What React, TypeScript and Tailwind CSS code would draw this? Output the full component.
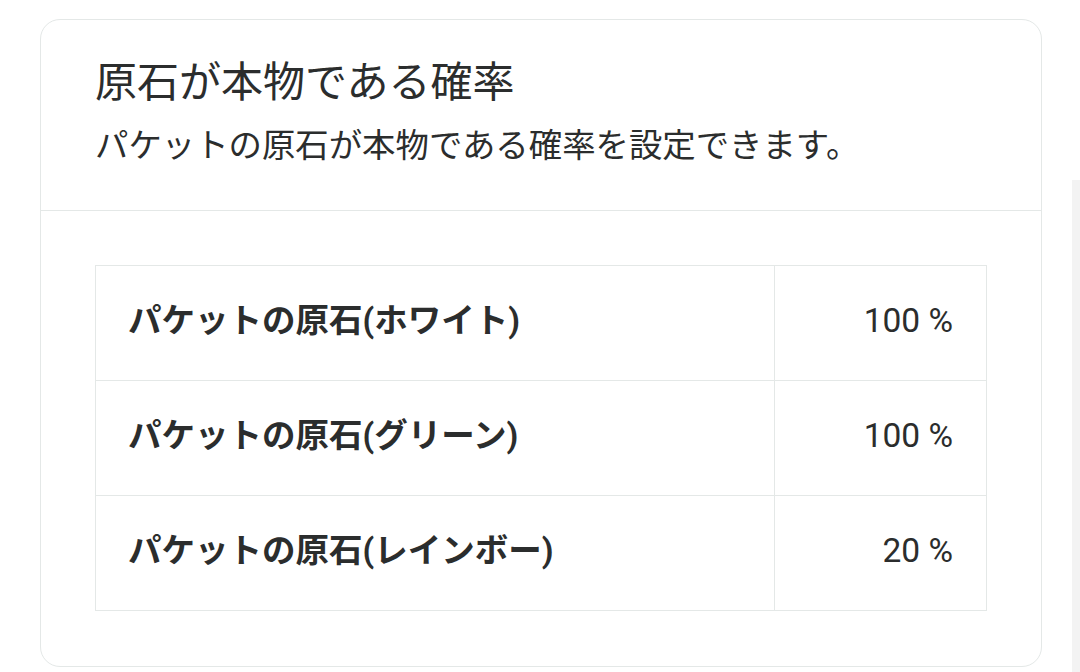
const rows = [
  { label: "パケットの原石(ホワイト)", value: "100 %" },
  { label: "パケットの原石(グリーン)", value: "100 %" },
  { label: "パケットの原石(レインボー)", value: "20 %" },
];

export default function App() {
  return (
    <div
      className="relative h-[672px] w-[1080px] overflow-hidden bg-white text-[#2b2d2d]"
      style={{ fontFamily: 'Roboto, "Noto Sans CJK JP", sans-serif' }}
    >
      <div className="ml-[40px] mt-[19px] w-[1002px] rounded-[20px] border border-[#e4e8e7] bg-white">
        <div className="flex h-[191px] flex-col border-b border-[#e4e8e7] px-[54px] pt-[36px]">
          <h2 className="text-[42px] leading-[54px] font-normal">原石が本物である確率</h2>
          <p className="mt-[14px] text-[33.4px] leading-[44px]">
            パケットの原石が本物である確率を設定できます。
          </p>
        </div>
        <div className="px-[54px] pt-[54px] pb-[55px]">
          <table className="w-full border-collapse border border-[#e4e8e7]">
            <tbody>
              {rows.map((r) => (
                <tr key={r.label} className="h-[115px] border-b border-[#e4e8e7]">
                  <td className="w-[679px] border-r border-[#e4e8e7] pl-[32px] pb-[3px] text-[33.5px] font-bold">
                    {r.label}
                  </td>
                  <td className="pr-[33px] pb-[3px] text-right text-[33.5px]">{r.value}</td>
                </tr>
              ))}
            </tbody>
          </table>
        </div>
      </div>
      <div className="absolute right-0 top-[180px] h-[492px] w-[8px] bg-[#f3f3f3]" />
    </div>
  );
}
